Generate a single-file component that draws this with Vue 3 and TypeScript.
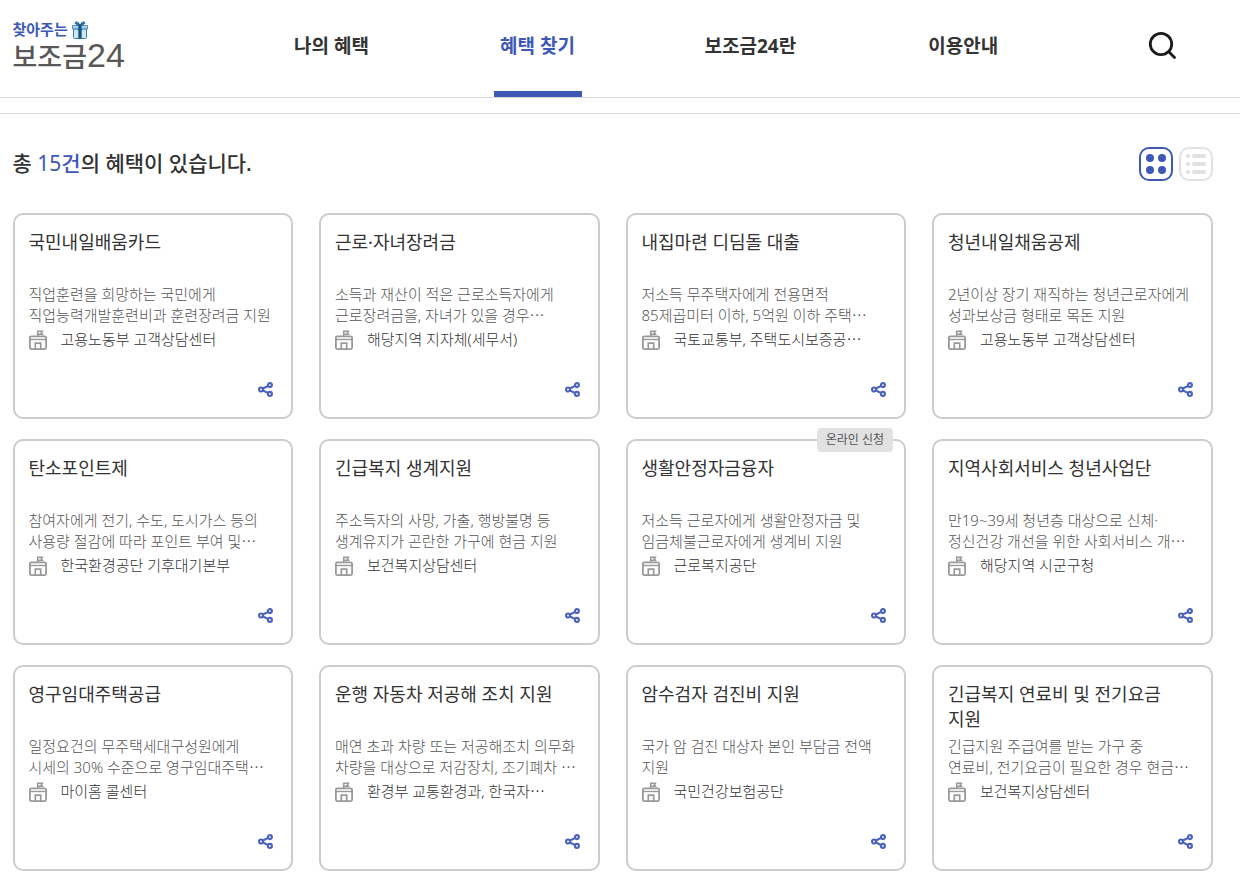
<script setup lang="ts">
import { ref } from 'vue'

interface Benefit {
  title: string
  summary: string
  agency: string
  online?: boolean
}

const menu: string[] = ['나의 혜택', '혜택 찾기', '보조금24란', '이용안내']
const activeMenu = '혜택 찾기'
const view = ref<'grid' | 'list'>('grid')

const benefits: Benefit[] = [
  { title: '국민내일배움카드', summary: '직업훈련을 희망하는 국민에게\n직업능력개발훈련비과 훈련장려금 지원', agency: '고용노동부 고객상담센터' },
  { title: '근로·자녀장려금', summary: '소득과 재산이 적은 근로소득자에게\n근로장려금을, 자녀가 있을 경우⋯', agency: '해당지역 지자체(세무서)' },
  { title: '내집마련 디딤돌 대출', summary: '저소득 무주택자에게 전용면적\n85제곱미터 이하, 5억원 이하 주택⋯', agency: '국토교통부, 주택도시보증공⋯' },
  { title: '청년내일채움공제', summary: '2년이상 장기 재직하는 청년근로자에게\n성과보상금 형태로 목돈 지원', agency: '고용노동부 고객상담센터' },
  { title: '탄소포인트제', summary: '참여자에게 전기, 수도, 도시가스 등의\n사용량 절감에 따라 포인트 부여 및⋯', agency: '한국환경공단 기후대기본부' },
  { title: '긴급복지 생계지원', summary: '주소득자의 사망, 가출, 행방불명 등\n생계유지가 곤란한 가구에 현금 지원', agency: '보건복지상담센터' },
  { title: '생활안정자금융자', summary: '저소득 근로자에게 생활안정자금 및\n임금체불근로자에게 생계비 지원', agency: '근로복지공단', online: true },
  { title: '지역사회서비스 청년사업단', summary: '만19~39세 청년층 대상으로 신체·\n정신건강 개선을 위한 사회서비스 개⋯', agency: '해당지역 시군구청' },
  { title: '영구임대주택공급', summary: '일정요건의 무주택세대구성원에게\n시세의 30% 수준으로 영구임대주택⋯', agency: '마이홈 콜센터' },
  { title: '운행 자동차 저공해 조치 지원', summary: '매연 초과 차량 또는 저공해조치 의무화\n차량을 대상으로 저감장치, 조기폐차 ⋯', agency: '환경부 교통환경과, 한국자⋯' },
  { title: '암수검자 검진비 지원', summary: '국가 암 검진 대상자 본인 부담금 전액\n지원', agency: '국민건강보험공단' },
  { title: '긴급복지 연료비 및 전기요금 지원', summary: '긴급지원 주급여를 받는 가구 중\n연료비, 전기요금이 필요한 경우 현금⋯', agency: '보건복지상담센터' },
]
</script>

<template>
  <div class="page">
    <header class="header">
      <div class="inner header-row">
        <a class="logo" href="#">
          <span class="logo-top">
            찾아주는
            <svg class="gift" viewBox="0 0 16 18" aria-hidden="true">
              <path d="M1.5 8h13v8.6q0 .9-.9.9H2.4q-.9 0-.9-.9z" fill="#cfe6f5" stroke="#3a7fae" />
              <path d="M.5 4.5h15V8H.5z" fill="#a5d0ea" stroke="#3a7fae" stroke-width=".8" />
              <path d="M6.3 4h3.4v13.5H6.3z" fill="#16537f" />
              <path d="M8 4.2C6.5 1 4.2 .4 3.3 1.5 2.6 2.7 4.5 4 8 4.2zM8 4.2C9.5 1 11.8 .4 12.7 1.5 13.4 2.7 11.5 4 8 4.2z" fill="#2b78ac" stroke="#16537f" stroke-width=".9" />
            </svg>
          </span>
          <span class="logo-main">보조금<span class="logo-num">24</span></span>
        </a>
        <nav class="menu">
          <a v-for="item in menu" :key="item" href="#" class="menu-item" :class="{ active: item === activeMenu }">{{ item }}</a>
        </nav>
        <button class="search" type="button" aria-label="검색">
          <svg viewBox="0 0 28 28" fill="none" stroke="#1b1b1b" stroke-width="2.8" stroke-linecap="round" aria-hidden="true">
            <circle cx="13" cy="13" r="10.7" />
            <path d="M21 21l5.5 5.5" />
          </svg>
        </button>
      </div>
    </header>
    <main class="content">
      <div class="inner">
        <div class="toolbar">
          <h1 class="count">총 <span class="count-num"><span class="digits">15</span>건</span>의 혜택이 있습니다.</h1>
          <div class="views">
            <button class="view" :class="{ on: view === 'grid' }" type="button" aria-label="카드형 보기" :aria-pressed="view === 'grid'" @click="view = 'grid'">
              <svg viewBox="0 0 30 30" fill="currentColor" aria-hidden="true">
                <circle cx="9" cy="9" r="4" /><circle cx="21" cy="9" r="4" />
                <circle cx="9" cy="21" r="4" /><circle cx="21" cy="21" r="4" />
              </svg>
            </button>
            <button class="view" :class="{ on: view === 'list' }" type="button" aria-label="목록형 보기" :aria-pressed="view === 'list'" @click="view = 'list'">
              <svg viewBox="0 0 30 30" fill="currentColor" aria-hidden="true">
                <circle cx="7" cy="7" r="2" /><circle cx="7" cy="15" r="2" /><circle cx="7" cy="23" r="2" />
                <rect x="11" y="5" width="14" height="4" rx="2" />
                <rect x="11" y="13" width="14" height="4" rx="2" />
                <rect x="11" y="21" width="14" height="4" rx="2" />
              </svg>
            </button>
          </div>
        </div>
        <ul class="cards">
          <li v-for="b in benefits" :key="b.title" class="card">
            <span v-if="b.online" class="badge">온라인 신청</span>
            <h2 class="title"><a href="#">{{ b.title }}</a></h2>
            <p class="summary">{{ b.summary }}</p>
            <p class="agency">
              <svg class="building" viewBox="0 0 18 20" fill="none" stroke="#999" aria-hidden="true">
                <path d="M8.7 6V.5M8.7 1.2h4.6l-1 1.5 1 1.5H8.7" stroke-width="1.6" />
                <rect x=".9" y="6.3" width="16.2" height="12.8" rx="1.5" stroke-width="1.8" />
                <path d="M1 9.5h16" stroke-width="1.4" />
                <path d="M6.3 19v-5.800h5.400V19" stroke-width="1.700" />
              </svg>
              {{ b.agency }}
            </p>
            <button class="share" type="button" aria-label="공유하기">
              <svg viewBox="0 0 15 15" fill="none" stroke="#4a62bd" stroke-width="2.1" aria-hidden="true">
                <path d="M5 6.5l4.7-2.4M5 8.5l4.7 2.4" />
                <circle cx="3" cy="7.5" r="2" />
                <circle cx="11.9" cy="3.1" r="2" />
                <circle cx="11.9" cy="11.9" r="2" />
              </svg>
            </button>
          </li>
        </ul>
      </div>
    </main>
  </div>
</template>

<style>
body {
  margin: 0;
  background: #fff;
}
</style>

<style scoped>
.page {
  font-family: 'Noto Sans', 'Noto Sans CJK KR', sans-serif;
  color: #333;
  word-break: keep-all;
}
a {
  color: inherit;
  text-decoration: none;
}
button {
  padding: 0;
  border: 0;
  background: none;
  cursor: pointer;
}
svg {
  display: block;
}
.header {
  padding-right: 15px;
  border-bottom: 1px solid #d9d9d9;
}
.inner {
  max-width: 1200px;
  margin: 0 auto;
}
.header-row {
  display: flex;
  align-items: stretch;
  height: 97px;
}
.logo {
  display: flex;
  flex-direction: column;
  width: 275px;
  padding-top: 21px;
  font-family: 'Liberation Sans', 'Noto Sans CJK KR', sans-serif;
}
.logo-top {
  display: flex;
  align-items: center;
  gap: 4px;
  height: 18px;
  font-size: 15px;
  font-weight: 700;
  line-height: 18px;
  color: #3d58b5;
}
.gift {
  width: 16px;
  height: 18px;
}
.logo-main {
  font-size: 27px;
  font-weight: 500;
  line-height: 32px;
  color: #595757;
}
.logo-num {
  font-size: 34px;
  font-weight: 400;
  line-height: 32px;
}
.menu {
  display: flex;
  gap: 118px;
}
.menu-item {
  box-sizing: border-box;
  min-width: 88px;
  padding: 0 5px;
  border-bottom: 6px solid transparent;
  font-size: 19px;
  font-weight: 700;
  line-height: 92px;
  height: 97px;
  text-align: center;
}
.menu-item.active {
  color: #3d58b5;
  border-color: #3d58b5;
}
.search {
  align-self: center;
  margin: 0 37px 8px auto;
}
.search svg {
  width: 28px;
  height: 28px;
}
.content {
  margin-top: 15px;
  padding: 33px 15px 0 0;
  border-top: 1px solid #d9d9d9;
}
.toolbar {
  display: flex;
  align-items: flex-start;
  justify-content: space-between;
  margin-bottom: 32px;
}
.count {
  margin: 0;
  font-size: 21px;
  font-weight: 500;
  line-height: 33px;
}
.count-num {
  color: #3d58b5;
}
.digits {
  font-weight: 400;
}
.views {
  display: flex;
  gap: 6px;
}
.view {
  width: 34px;
  height: 34px;
  border: 2px solid currentColor;
  border-radius: 10px;
  color: #e1e1e1;
}
.view.on {
  color: #3d58b5;
}
.view svg {
  width: 30px;
  height: 30px;
}
.cards {
  display: grid;
  grid-template-columns: repeat(4, minmax(0, 1fr));
  gap: 20px 26px;
  margin: 0;
  padding: 0;
  list-style: none;
}
.card {
  position: relative;
  display: flex;
  flex-direction: column;
  padding: 15px 14px 20px;
  border: 2px solid #ccc;
  border-radius: 10px;
}
.badge {
  position: absolute;
  top: -13px;
  right: 11px;
  padding: 0 9px;
  border-radius: 4px;
  background: #e1e1e1;
  color: #555;
  font-size: 12px;
  line-height: 24px;
}
.title {
  min-height: 50px;
  margin: 0 0 4px;
  padding-right: 16px;
  font-size: 18px;
  font-weight: 400;
  line-height: 25px;
}
.summary {
  margin: 0;
  font-size: 15px;
  font-weight: 300;
  line-height: 21px;
  color: #555;
  white-space: pre;
}
.agency {
  display: flex;
  align-items: center;
  gap: 14px;
  margin: 1px 0 30px;
  font-size: 15px;
  font-weight: 300;
  line-height: 25px;
  color: #333;
  white-space: nowrap;
}
.building {
  width: 18px;
  height: 20px;
}
.share {
  align-self: flex-end;
  margin-right: 4px;
}
.share svg {
  width: 15px;
  height: 15px;
}
</style>
